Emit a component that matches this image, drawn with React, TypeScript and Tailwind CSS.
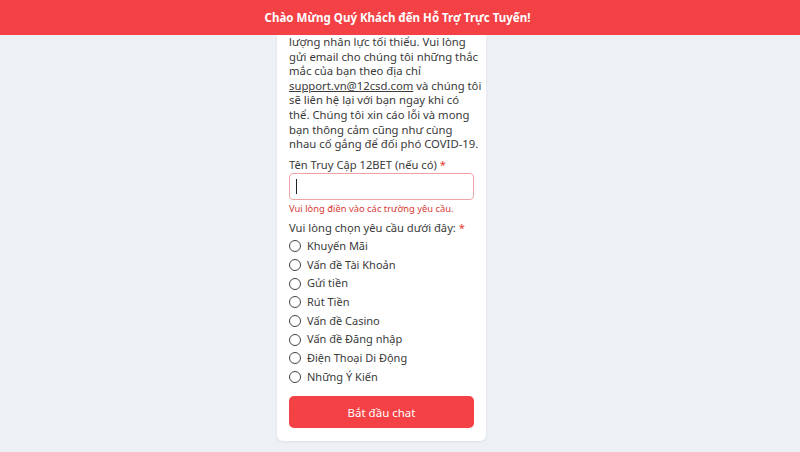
import React from "react";

const options = [
  "Khuyến Mãi",
  "Vấn đề Tài Khoản",
  "Gửi tiền",
  "Rút Tiền",
  "Vấn đề Casino",
  "Vấn đề Đăng nhập",
  "Điện Thoại Di Động",
  "Những Ý Kiến",
];

const lines: React.ReactNode[] = [
  "lượng nhân lực tối thiểu. Vui lòng",
  "gửi email cho chúng tôi những thắc",
  "mắc của bạn theo địa chỉ",
  <>
    <span className="underline">support.vn@12csd.com</span> và chúng tôi
  </>,
  "sẽ liên hệ lại với bạn ngay khi có",
  "thể. Chúng tôi xin cáo lỗi và mong",
  "bạn thông cảm cũng như cùng",
  "nhau cố gắng để đối phó COVID-19.",
];

export default function App() {
  return (
    <div
      className="relative h-[452px] w-[800px] overflow-hidden bg-[#edf0f5] text-[#333]"
      style={{ fontFamily: '"Noto Sans", "Open Sans", sans-serif' }}
    >
      <div className="absolute left-0 right-0 top-0 z-10 flex h-[35px] items-center justify-center bg-[#f44146] pr-[5px]">
        <span className="text-[11.5px] font-bold text-white">Chào Mừng Quý Khách đến Hỗ Trợ Trực Tuyến!</span>
      </div>
      <div className="flex justify-center pr-[37px] pt-[35px]">
        <div className="w-[209px] rounded-b-md bg-white px-3 pb-[13px] shadow-[0_1px_3px_rgba(0,0,0,0.07)]">
          <div className="text-[11.3px] leading-[14.6px] text-[#3a3a3a]">
            {lines.map((l, i) => (
              <div key={i} className="whitespace-nowrap">
                {l}
              </div>
            ))}
          </div>
          <div className="mt-[6px] whitespace-nowrap text-[11.2px] leading-[14.6px] text-[#3a3a3a]">
            Tên Truy Cập 12BET (nếu có) <span className="text-[#e53935]">*</span>
          </div>
          <div className="mt-[1px] flex h-[27px] items-center rounded-[4px] border border-[#eba3a3] px-[6px]">
            <span className="h-[15px] w-[1px] bg-[#222]" />
          </div>
          <div className="mt-[2px] whitespace-nowrap text-[9.4px] leading-[13px] text-[#d83a36]">
            Vui lòng điền vào các trường yêu cầu.
          </div>
          <div className="mt-[6px] whitespace-nowrap text-[11.2px] leading-[14.6px] text-[#3a3a3a]">
            Vui lòng chọn yêu cầu dưới đây: <span className="text-[#e53935]">*</span>
          </div>
          <div className="mt-[1px] flex flex-col">
            {options.map((o) => (
              <label key={o} className="flex h-[18.7px] items-center gap-[6px] whitespace-nowrap text-[11px] text-[#3a3a3a]">
                <span className="h-[12px] w-[12px] shrink-0 rounded-full border border-[#444] bg-white" />
                {o}
              </label>
            ))}
          </div>
          <button className="mt-[10px] flex h-[32px] w-full items-center justify-center rounded-[5px] bg-[#f44146] text-[11.5px] text-white">
            Bắt đầu chat
          </button>
        </div>
      </div>
    </div>
  );
}
